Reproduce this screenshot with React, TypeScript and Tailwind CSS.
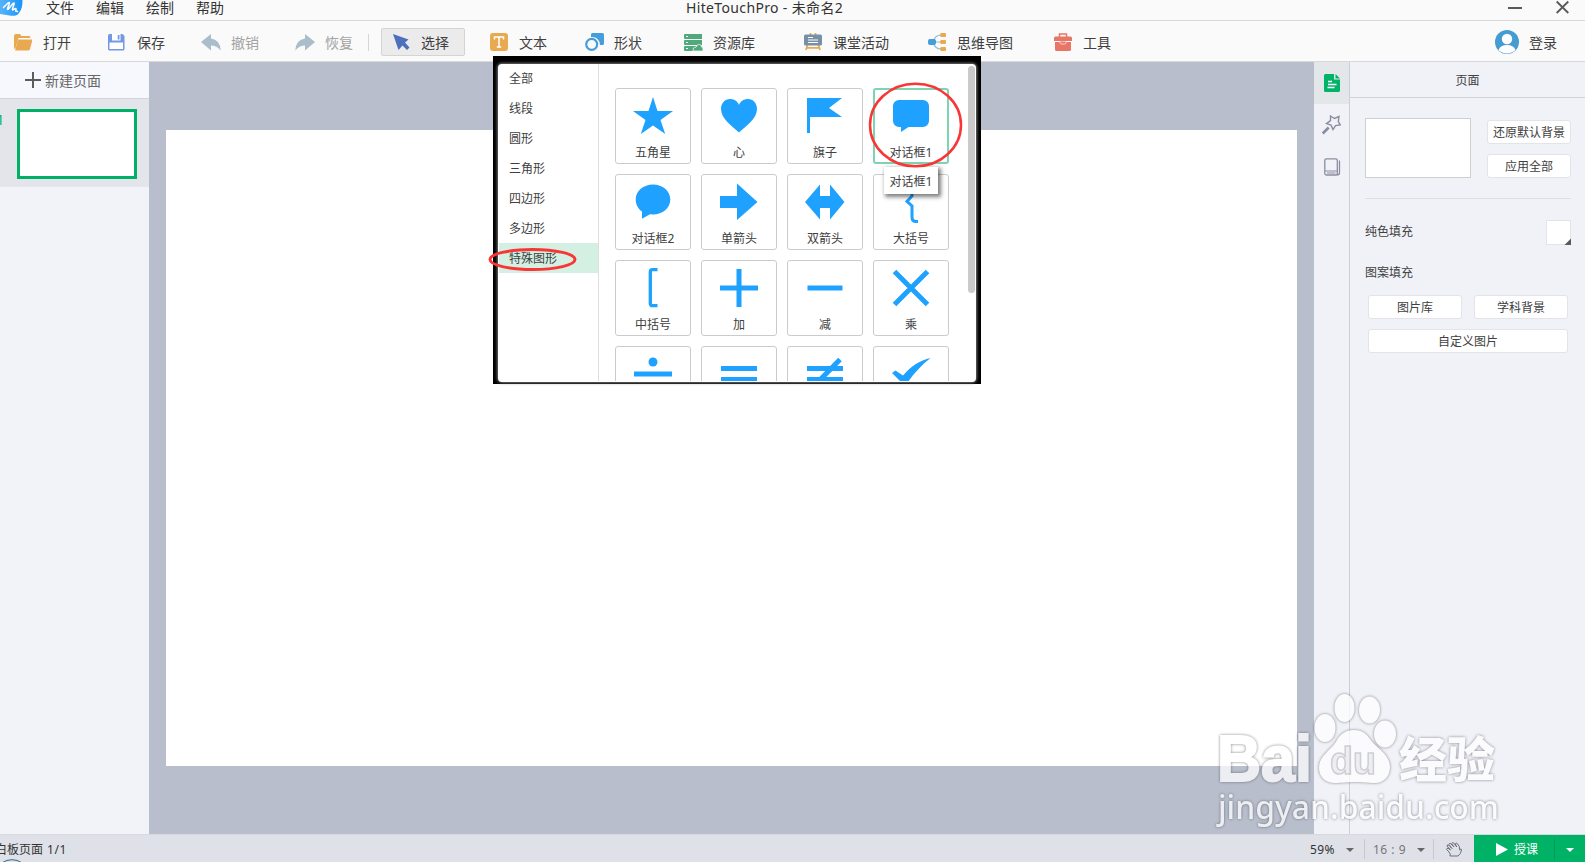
import { ReactNode } from "react";

interface ToolItemProps {
  icon: ReactNode;
  label: string;
  className?: string;
  slot?: string;
  disabled?: boolean;
}

const menus = ["文件", "编辑", "绘制", "帮助"];

const shapeGroups = ["全部", "线段", "圆形", "三角形", "四边形", "多边形", "特殊图形"];

const shapes: { name: string; art: ReactNode }[] = [
  {
    name: "五角星",
    art: <path d="M37 8l4.500 14H57L44.500 31l4.700 14L37 36.500 24.800 45l4.700-14L17 22h15.500z" />,
  },
  {
    name: "心",
    art: <path d="M37 43.500C30 37 19 30 19 20c0-6 4-10 9-10 4 0 7.500 2 9 6 1.500-4 5-6 9-6 5 0 9 4 9 10 0 10-11 17-18 23.500z" />,
  },
  { name: "旗子", art: <path d="M19 9h35L41 19l13 9H22v16h-3z" /> },
  {
    name: "对话框1",
    art: <path d="M25 11h24a6 6 0 0 1 6 6v15a6 6 0 0 1-6 6H34.500L27 43v-5h-2a6 6 0 0 1-6-6V17a6 6 0 0 1 6-6z" />,
  },
  {
    name: "对话框2",
    art: <path d="M37 9.500c9.600 0 17.300 6.500 17.300 15S46.600 39.500 37 39.500l-3-.2-8 4.500v-7.300c-4-2.700-6.300-7-6.300-12 0-8.500 7.700-15 17.300-15z" />,
  },
  { name: "单箭头", art: <path d="M18 21h17V8.500L55.500 27 35 45V33H18z" /> },
  { name: "双箭头", art: <path d="M17 27L32 9.500V21h10V9.500L56.500 27 42 44.500V33H32v11.500z" /> },
  {
    name: "大括号",
    art: <path d="M44 8.500h-2q-4 0-4 4v8.500l-5 5.500 5 4.500v11q0 4.500 4 4.500h2" fill="none" stroke="#1ea1ff" strokeWidth="3" />,
  },
  {
    name: "中括号",
    art: <path d="M41.500 8.700h-5q-2.200 0-2.200 2.500v31q0 2.500 2.200 2.500h5" fill="none" stroke="#1ea1ff" strokeWidth="3.300" />,
  },
  { name: "加", art: <path d="M34.500 8h5v16.500H56v5H39.500V46h-5V29.500H18v-5h16.500z" /> },
  { name: "减", art: <path d="M19.500 24.500h35v5h-35z" /> },
  { name: "乘", art: <path d="M20.500 10.500l33 33m0-33l-33 33" stroke="#1ea1ff" strokeWidth="5" /> },
  {
    name: "除",
    art: (
      <>
        <circle cx="37" cy="15" r="4.500" />
        <path d="M18 24.500h38v5H18z" />
      </>
    ),
  },
  { name: "等于", art: <path d="M19 19h36v5H19zM19 30h36v5H19z" /> },
  {
    name: "不等于",
    art: (
      <>
        <path d="M19 19h36v5H19zM19 30h36v5H19z" />
        <path d="M52 12.500L25 40" stroke="#1ea1ff" strokeWidth="5" />
      </>
    ),
  },
  { name: "对勾", art: <path d="M18 26l3.500-2.500 7.500 5C36 20 46 13 56.500 11 46 19 38 29 31 39z" /> },
];

function ToolItem({ icon, label, className = "", slot = "w-[29px]", disabled }: ToolItemProps) {
  return (
    <div className={`flex shrink-0 items-center ${className}`}>
      <span className={`shrink-0 ${slot}`}>{icon}</span>
      <span className={`pt-[2px] text-sm whitespace-nowrap ${disabled ? "text-[#a3a3a3]" : "text-[#404040]"}`}>{label}</span>
    </div>
  );
}

function Caret({ className = "" }: { className?: string }) {
  return (
    <svg width="8" height="4" viewBox="0 0 8 4" fill="currentColor" className={className}>
      <path d="M0 0h8L4 4z" />
    </svg>
  );
}

function PanelButton({ label, className }: { label: string; className: string }) {
  return (
    <button className={`h-6 shrink-0 rounded-[3px] border border-[#e3e4ea] bg-white text-xs leading-[21px] whitespace-nowrap ${className}`}>
      {label}
    </button>
  );
}

function TitleBar() {
  return (
    <div className="flex h-[21px] shrink-0 items-start border-b border-[#d9d9d9] bg-[#fafafa] text-sm text-[#333]">
      <svg width="23" height="16" viewBox="0 0 23 16" className="shrink-0">
        <defs>
          <linearGradient id="logo" x1="0" x2="1">
            <stop offset="0" stopColor="#55b4f7" />
            <stop offset="1" stopColor="#1a94fa" />
          </linearGradient>
        </defs>
        <path d="M0 0h22.500c0 6-1 10-3.500 13-2 3-5 3-8 2.700L0 14z" fill="url(#logo)" />
        <path d="M3.500 7.500L8 3q2-1.500 1.300.7L7.500 8.500q-.3 1.500 1 .5L13 3.500q1.500-1.500 1 .7L12.500 9q-.2 1.500 1 .7l1.500-1q1.200-.5 1 .8l-.3 1.500 1.800.5" fill="none" stroke="#fff" strokeWidth="1.500" strokeLinecap="round" />
      </svg>
      <nav className="ml-[23px] flex gap-[22px] leading-4">
        {menus.map((m) => (
          <span key={m}>{m}</span>
        ))}
      </nav>
      <span className="ml-[462px] leading-4 tracking-[0.350px] whitespace-nowrap">HiteTouchPro - 未命名2</span>
      <div className="mr-[16px] ml-auto flex items-center gap-[34px] text-[#595959]">
        <svg width="14" height="14" viewBox="0 0 14 14">
          <path d="M0 7h14" stroke="currentColor" strokeWidth="2" />
        </svg>
        <svg width="13" height="15" viewBox="0 0 13 15">
          <path d="M.7 1.500l11.600 11.500M12.300 1.500L.7 13" stroke="currentColor" strokeWidth="1.800" />
        </svg>
      </div>
    </div>
  );
}

function Toolbar() {
  return (
    <div className="flex h-[41px] shrink-0 items-center border-b border-[#d9d9d9] bg-[#fafafa] pt-[2px] pl-[14px]">
      <ToolItem
        label="打开"
        icon={
          <svg width="18" height="17" viewBox="0 0 18 17">
            <path d="M0 15V2q0-2 2-2h4l1.500 2H15q1.500 0 1.500 2H4.500L1.500 14z" fill="#e8a950" />
            <path d="M4 5.500h14.500L16 15q-.5 1.500-2 1.500H1z" fill="#e8a950" />
          </svg>
        }
      />
      <ToolItem
        label="保存"
        className="ml-[37px]"
        icon={
          <svg width="17" height="17" viewBox="0 0 17 17">
            <path d="M1.500 0h13L16.500 2v13q0 1.500-1.500 1.500H1.500Q0 16.500 0 15V1.500Q0 0 1.500 0z" fill="#7399e6" />
            <path d="M4 0h8.500v6.500H4zM1.500 8.500H15V15H1.500z" fill="#fff" />
            <path d="M9.700 1h1.800v4.500H9.700z" fill="#7399e6" />
          </svg>
        }
      />
      <ToolItem
        label="撤销"
        disabled
        className="ml-[36px]"
        slot="w-[30px]"
        icon={
          <svg width="20" height="17" viewBox="0 0 20 17" fill="#aabdcb">
            <path d="M0 8l10-8v4.500q9 1 9.700 12-4-5-9.700-5v5z" />
          </svg>
        }
      />
      <ToolItem
        label="恢复"
        disabled
        className="ml-[36px]"
        slot="w-[30px]"
        icon={
          <svg width="20" height="17" viewBox="0 0 20 17" fill="#aabdcb">
            <path d="M20 8L10 0v4.500q-9 1-9.700 12 4-5 9.700-5v5z" />
          </svg>
        }
      />
      <div className="ml-[15px] h-[17px] w-px bg-[#d6d6d6]" />
      <div className="ml-[12px] flex h-7 w-[84px] shrink-0 items-center rounded-[2px] border border-[#d4d4d4] bg-[#ebebeb] pl-[11px]">
        <ToolItem
          label="选择"
          slot="w-[28px]"
          icon={
            <svg width="17" height="17" viewBox="0 0 17 17" fill="#4c70bd">
              <path d="M0 0l15.500 5.500L12 8.500l4.500 5-2.500 2.500-4.500-4.500L5.500 16z" />
            </svg>
          }
        />
      </div>
      <ToolItem
        label="文本"
        className="ml-[25px]"
        icon={
          <svg width="18" height="18" viewBox="0 0 18 18">
            <rect width="18" height="18" rx="3" fill="#e8a950" />
            <path d="M4.500 6.500v-2.500h9v2.500M9 4v10M6.800 14h4.400" fill="none" stroke="#fff" strokeWidth="1.500" />
          </svg>
        }
      />
      <ToolItem
        label="形状"
        className="ml-[38px]"
        icon={
          <svg width="19" height="18" viewBox="0 0 19 18">
            <path d="M6 4V1.500Q6 0 7.500 0h10Q19 0 19 1.500v9q0 1.500-1.500 1.500H15q0-3.500-2.500-6T6 4z" fill="#459edb" />
            <circle cx="6.700" cy="11.300" r="5.500" fill="none" stroke="#459edb" strokeWidth="2.200" />
          </svg>
        }
      />
      <ToolItem
        label="资源库"
        className="ml-[42px]"
        icon={
          <svg width="19" height="17" viewBox="0 0 19 17">
            <path d="M1 0h17v5H1q-1 0-1-1V1q0-1 1-1zM1 6h17v5H1q-1 0-1-1V7q0-1 1-1zM1 12h11v5H1q-1 0-1-1v-3q0-1 1-1z" fill="#50a97a" />
            <path d="M2 2.500h2M2 8.500h2M2 14.500h2" stroke="#fff" strokeWidth="1.200" />
            <path d="M9 17q-.5-4 3-4 1-3 3.500-2.500T17.500 13q2 .5 1.500 4z" fill="#50a97a" stroke="#fafafa" strokeWidth=".7" />
          </svg>
        }
      />
      <ToolItem
        label="课堂活动"
        className="ml-[49px]"
        icon={
          <svg width="18" height="18" viewBox="0 0 18 18">
            <path d="M6.500 0v2M11.500 0v2M3.500 12L2 17M14.500 12l1.500 5M2 14.800h14" stroke="#e8a950" strokeWidth="1.800" />
            <rect y="1.500" width="18" height="11" rx="1.500" fill="#7690a5" />
            <path d="M4 4.500h5M4 7h10M4 9.500h10" stroke="#fff" strokeWidth="1" />
          </svg>
        }
      />
      <ToolItem
        label="思维导图"
        className="ml-[39px]"
        icon={
          <svg width="18" height="18" viewBox="0 0 18 18">
            <path d="M13 2Q7 2 5 9q2 7 8 7M5 9h8" fill="none" stroke="#93bcd8" strokeWidth="1.200" />
            <rect y="6" width="8" height="6" rx="2" fill="#459edb" />
            <path d="M13 0h4q1 0 1 1v2q0 1-1 1h-4q-2-2 0-4zM13 7h4q1 0 1 1v2q0 1-1 1h-4q-2-2 0-4zM13 14h4q1 0 1 1v2q0 1-1 1h-4q-2-2 0-4z" fill="#e8a950" />
          </svg>
        }
      />
      <ToolItem
        label="工具"
        className="ml-[41px]"
        icon={
          <svg width="18" height="18" viewBox="0 0 18 18">
            <path d="M5.500 4V1h7v3" fill="none" stroke="#e87667" strokeWidth="1.500" />
            <path d="M0 5q0-1.500 1.500-1.500h15Q18 3.500 18 5v3H0zM1 9h16v7.500q0 1.500-1.500 1.500h-13Q1 18 1 16.500z" fill="#e87667" />
            <path d="M6 8.500v1q0 1.500 1.500 1.500h3q1.500 0 1.500-1.500v-1" fill="#e87667" stroke="#fbd5cf" strokeWidth="1" />
          </svg>
        }
      />
      <ToolItem
        label="登录"
        className="mr-[28px] ml-auto"
        slot="w-[34px]"
        icon={
          <svg width="24" height="24" viewBox="0 0 24 24">
            <circle cx="12" cy="12" r="12" fill="#449cd0" />
            <circle cx="12" cy="9" r="5.200" fill="#fff" />
            <path d="M3.500 20q2-5 8.500-5t8.500 5Q17 23.400 12 23.400T3.500 20z" fill="#fff" />
          </svg>
        }
      />
    </div>
  );
}

function PageList() {
  return (
    <aside className="flex w-[149px] shrink-0 flex-col bg-[#f1f3f8]">
      <div className="flex h-[37px] items-center border-b border-[#d4d5d9] bg-[#f6f8fd] pl-[25px] text-sm text-[#666]">
        <svg width="16" height="16" viewBox="0 0 16 16" className="mr-[4px]">
          <path d="M8 0v16M0 8h16" stroke="#5c5c5c" strokeWidth="2" />
        </svg>
        <span className="pt-[2px]">新建页面</span>
      </div>
      <div className="flex h-[88px] bg-[#e4e5ea] pt-[10px]">
        <span className="-ml-[4px] w-[21px] font-['Open_Sans'] text-[15px] leading-[21px] text-[#00b067]">1</span>
        <div className="h-[70px] w-[120px] border-[3px] border-[#00b067] bg-white" />
      </div>
    </aside>
  );
}

function SideRail() {
  return (
    <div className="flex w-[36px] shrink-0 flex-col items-center border-r border-[#cdcfd6] bg-[#f1f2f8]">
      <div className="flex h-[42px] w-full items-center justify-center bg-[#e4e7ea]">
        <svg width="16" height="18" viewBox="0 0 16 18" className="-mr-px">
          <path d="M1.500 0H10v5.500h6v11q0 1.500-1.500 1.500h-13Q0 18 0 16.500v-15Q0 0 1.500 0z" fill="#00b368" />
          <path d="M11.500 0L16 4.500h-4.500z" fill="#00b368" />
          <path d="M4 7.500h4M4 10.500h8.500M3.500 13.500h7" stroke="#fff" strokeWidth="1.300" />
        </svg>
      </div>
      <svg width="19" height="20" viewBox="0 0 19 20" className="mt-[11px]" fill="none" stroke="#8a8da0">
        <path d="M8.500 1l4 2.500L17 1.500l-.7 5 2 3.500-4.800.6-2.500 4-2-4.500-4.500-1.500 4-3z" strokeWidth="1.400" />
        <path d="M.7 18.500l6-6" strokeWidth="2.600" />
      </svg>
      <svg width="17" height="18" viewBox="0 0 17 18" className="mt-[23px] -mr-px" fill="none" stroke="#8a8da0">
        <rect x=".8" y=".8" width="12.500" height="16.200" rx="1.500" strokeWidth="1.300" />
        <path d="M1 13h12M3 15h8.500" strokeWidth="1.200" />
        <path d="M15.500 2.500V15q0 2-3 2" strokeWidth="1.300" />
      </svg>
    </div>
  );
}

function PagePanel() {
  return (
    <aside className="w-[235px] shrink-0 bg-[#f1f2f8] text-xs text-[#404040]">
      <div className="flex h-[36px] items-center justify-center border-b border-[#cfd3d7] pt-[2px]">页面</div>
      <div className="mr-[14px] ml-[15px] flex h-[101px] border-b border-[#dcdee4] pt-[20px]">
        <div className="mr-[16px] h-[60px] w-[106px] border border-[#cfcfcf] bg-white" />
        <div className="flex flex-col gap-[10px] pt-[2px]">
          <PanelButton label="还原默认背景" className="w-[84px]" />
          <PanelButton label="应用全部" className="w-[84px]" />
        </div>
      </div>
      <div className="mr-[14px] ml-[15px] flex h-[66px] items-center justify-between">
        <span>纯色填充</span>
        <div className="flex size-[25px] items-end justify-end border border-[#e3e4ea] bg-white">
          <svg width="7" height="7" viewBox="0 0 7 7" className="-mr-px -mb-px shrink-0">
            <path d="M7 .5V7H.5z" fill="#5a5a5a" />
          </svg>
        </div>
      </div>
      <div className="ml-[15px] flex h-[16px] items-center">图案填充</div>
      <div className="mt-[14px] ml-[18px] flex w-[200px] flex-wrap justify-between gap-y-[10px]">
        <PanelButton label="图片库" className="w-[94px]" />
        <PanelButton label="学科背景" className="w-[94px]" />
        <PanelButton label="自定义图片" className="w-full" />
      </div>
    </aside>
  );
}

function ShapePicker() {
  return (
    <div className="absolute top-[56px] left-[493px] h-[328px] w-[488px] bg-black pt-[8px] pl-[5px]">
      <div className="flex h-[318px] w-[478px] overflow-hidden rounded-[4px] bg-white shadow-[0_0_3px_1px_#777]">
        <div className="ml-px flex h-[317px] w-[100px] shrink-0 flex-col border-r border-[#dedede] text-xs text-[#404040]">
          <div className="-mt-px" />
          {shapeGroups.map((g) => (
            <div
              key={g}
              className={`flex h-[30px] shrink-0 items-center pt-[2px] pl-[10px] ${g === "特殊图形" ? "bg-[#d4f0e3]" : ""}`}
            >
              {g}
            </div>
          ))}
        </div>
        <div className="ml-[16px] grid h-[317px] grid-cols-[repeat(4,76px)] content-start gap-[10px] overflow-hidden pt-[24px]">
          {shapes.map((s) => (
            <div
              key={s.name}
              className={`flex h-[76px] w-[76px] flex-col items-center rounded-[3px] text-xs text-[#404040] ${
                s.name === "对话框1" ? "border-2 border-[#7ed4b0]" : "border border-[#cbcbcb]"
              }`}
            >
              <svg
                width="74"
                height="52"
                viewBox="0 0 74 52"
                fill="#1ea1ff"
                className={`shrink-0 ${s.name === "对话框1" ? "-mt-px" : ""}`}
              >
                {s.art}
              </svg>
              <span className="mt-[3px] leading-[18px] whitespace-nowrap">{s.name}</span>
            </div>
          ))}
        </div>
        <div className="mt-[2px] mr-px ml-auto h-[227px] w-[7px] shrink-0 rounded-full bg-[#cacaca]" />
      </div>
      <div className="absolute top-[111px] left-[391px] flex h-[27px] w-[54px] items-center justify-center bg-white pt-[2px] text-xs whitespace-nowrap text-[#404040] shadow-[2px_2px_4px_1px_rgba(0,0,0,0.5)]">
        对话框1
      </div>
      {/* red pen marks over the chosen group and shape */}
      <svg width="488" height="328" viewBox="0 0 488 328" className="absolute top-0 left-0 overflow-visible" fill="none" stroke="#f93535">
        <ellipse cx="39.500" cy="203.500" rx="42.500" ry="10" strokeWidth="2.900" />
        <ellipse cx="422.500" cy="69" rx="45.500" ry="41.300" strokeWidth="2.500" />
      </svg>
    </div>
  );
}

function StatusBar() {
  return (
    <footer className="flex h-7 shrink-0 items-stretch overflow-hidden border-t border-[#d8d9dd] bg-[#dee1e8] text-xs text-[#333]">
      <div className="relative -ml-[5px] flex w-[100px] items-center pt-[3px]">
        白板页面<span className="ml-[4px] tracking-[0.600px]">1/1</span>
        <svg width="28" height="4" viewBox="0 0 28 4" className="absolute top-[24px] left-[3px]" fill="none" stroke="#2b6a93">
          <ellipse cx="14" cy="10" rx="13" ry="9.300" />
        </svg>
      </div>
      <div className="ml-auto flex w-[54px] items-center pt-[3px]">
        <span className="tracking-[0.350px]">59%</span>
        <Caret className="mr-[10px] ml-auto text-[#666]" />
      </div>
      <div className="mt-[4px] h-[20px] w-px bg-[#c6c9cf]" />
      <div className="flex w-[68px] items-center pt-[3px] pl-[8px] text-[#777]">
        <span className="tracking-[0.500px] whitespace-pre">16 : 9</span>
        <Caret className="mr-[8px] ml-auto text-[#666]" />
      </div>
      <div className="mt-[4px] h-[20px] w-px bg-[#c6c9cf]" />
      <div className="flex w-[40px] items-center justify-center pt-[2px]">
        <svg width="16" height="15" viewBox="0 0 16 15" fill="none" stroke="#6c707c" strokeWidth="1">
          <path d="M4 14q1-2-1-4L.700 7.500Q.5 6 2 6.200L4.500 8 1 4Q1 2.300 2.500 3L6 6.500 3 2.500Q3.200.8 4.600 1.500L8 5 5.700 1.500Q6.500 0 7.800 1l3 4-1.600-3Q10 .5 11.200 1.500q3 3 2.500 6.500 1.500-2 2-.5Q15 12 12 14z" />
        </svg>
      </div>
      <div className="-mt-px flex w-[111px] items-center bg-[#00b266] pt-[3px] text-white">
        <svg width="12" height="13" viewBox="0 0 12 13" className="ml-[22px]" fill="#fff">
          <path d="M0 0l12 6.500L0 13z" />
        </svg>
        <span className="ml-[6px] pt-px">授课</span>
        <div className="ml-[16px] h-[21px] w-px bg-[#009c58]" />
        <Caret className="ml-[11px]" />
      </div>
    </footer>
  );
}

function Watermark() {
  return (
    <svg
      width="310"
      height="150"
      viewBox="1205 685 310 150"
      className="pointer-events-none absolute top-[685px] left-[1205px] opacity-75 drop-shadow-[0_0_1.500px_rgba(60,60,70,0.800)]"
      fill="#fff"
    >
      <text x="1217" y="781" textLength="95" lengthAdjust="spacingAndGlyphs" stroke="#fff" strokeWidth="2" className="font-['Liberation_Sans'] text-[64px] font-bold">
        Bai
      </text>
      <ellipse cx="1325" cy="728" rx="10.500" ry="14" />
      <ellipse cx="1344.500" cy="708" rx="10" ry="14" />
      <ellipse cx="1369.500" cy="710" rx="10.500" ry="13.500" />
      <ellipse cx="1385" cy="734" rx="11" ry="13.500" />
      <path d="M1354 730c7 0 12 3 16 9 5 8 20 15 20 28 0 10-7 16-15 16-8 0-13-1-20-1-8 0-13 1-20 1-9 0-16-6-16-15 0-13 13-18 18-28 4-7 10-10 17-10z" />
      <text x="1330" y="774" textLength="46" lengthAdjust="spacingAndGlyphs" fill="#ececf0" stroke="#c3c4cb" strokeWidth="1.500" className="font-['Liberation_Sans'] text-[38px] font-bold">
        du
      </text>
      <text x="1399" y="777" textLength="96" lengthAdjust="spacingAndGlyphs" className="font-['Noto_Sans_CJK_SC',sans-serif] text-[48px] font-black">
        经验
      </text>
      <text x="1218" y="819" textLength="281" lengthAdjust="spacingAndGlyphs" className="font-['Noto_Sans'] text-[32px] font-medium">
        jingyan.baidu.com
      </text>
    </svg>
  );
}

export default function App() {
  return (
    <div className="relative flex h-[862px] w-[1585px] flex-col overflow-hidden bg-[#b8becc] font-['Noto_Sans','Noto_Sans_CJK_SC',sans-serif]">
      <TitleBar />
      <Toolbar />
      <div className="flex min-h-0 flex-1">
        <PageList />
        <main className="min-w-0 flex-1 pt-[68px] pr-[17px] pl-[17px]">
          <div className="h-[636px] bg-white" />
        </main>
        <SideRail />
        <PagePanel />
      </div>
      <StatusBar />
      <ShapePicker />
      <Watermark />
    </div>
  );
}
